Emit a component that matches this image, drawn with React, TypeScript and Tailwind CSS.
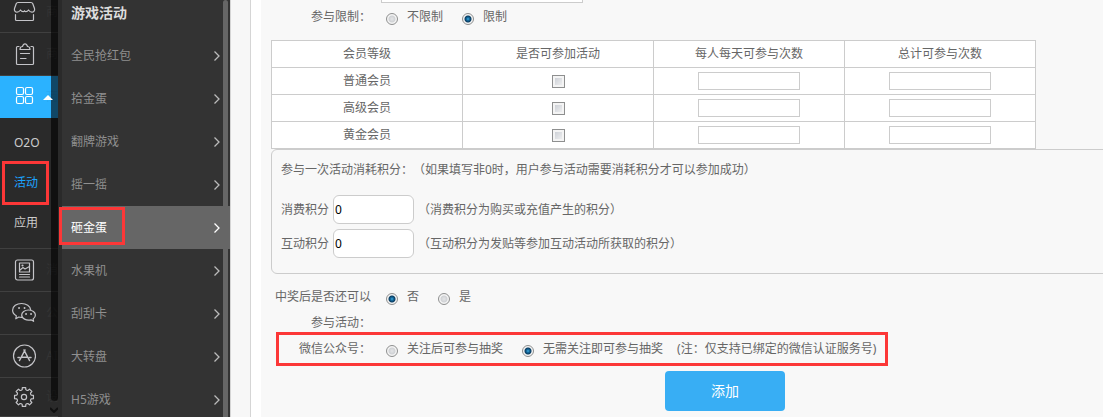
import type { ReactNode } from 'react'

const CONSUME_ROWS = [
  { id: 'consume', label: '消费积分', hint: '（消费积分为购买或充值产生的积分）' },
  { id: 'interact', label: '互动积分', hint: '（互动积分为发贴等参加互动活动所获取的积分）' },
]

const LEVELS = ['普通会员', '高级会员', '黄金会员']

const COLUMNS = ['会员等级', '是否可参加活动', '每人每天可参与次数', '总计可参与次数']

const GAMES = ['全民抢红包', '拾金蛋', '翻牌游戏', '摇一摇', '砸金蛋', '水果机', '刮刮卡', '大转盘', 'H5游戏']

const ACTIVE_GAME = '砸金蛋'

function Icon({ children }: { children: ReactNode }) {
  return (
    <svg viewBox="0 0 24 24" className="size-6 shrink-0" fill="none" stroke="currentColor" strokeWidth="1.2" strokeLinejoin="round" strokeLinecap="round">
      {children}
    </svg>
  )
}

function ShopIcon() {
  return (
    <Icon>
      <path d="M6 2.500h13c1 0 1.500.5 1.800 1.300l1.700 4.700c.6 2-.8 3.700-2.600 3.700-1.500 0-2.500-.9-3.400-2.200-.8 1.300-1.700 1.700-2.600 1.700-.6 0-1.100-.4-1.400-1-.3.6-.8 1-1.400 1-.9 0-1.800-.4-2.600-1.700-.9 1.300-1.900 2.200-3.400 2.200-1.800 0-3.200-1.700-2.600-3.700l1.700-4.700C4.500 3 5 2.500 6 2.500z" />
      <path d="M3.500 14.500v5a1 1 0 0 0 1 1h16a1 1 0 0 0 1-1v-5" />
    </Icon>
  )
}

function ClipboardIcon() {
  return (
    <Icon>
      <path d="M7 4.500H5.500a1 1 0 0 0-1 1v16a1 1 0 0 0 1 1h15a1 1 0 0 0 1-1v-16a1 1 0 0 0-1-1H19" />
      <path d="M8 7.500c0-2 1-3 2.500-3 .5-1.700 1.200-2.700 2.500-2.700s2 1 2.500 2.700c1.500 0 2.500 1 2.500 3z" />
      <path d="M8.500 11.500h9M8.500 16.500h5.500" />
    </Icon>
  )
}

function GridIcon() {
  return (
    <Icon>
      <rect x="4.500" y="2.500" width="7" height="7" rx="1.500" />
      <rect x="13.500" y="2.500" width="7" height="7" rx="1.500" />
      <rect x="4.500" y="11.500" width="7" height="7" rx="1.500" />
      <rect x="13.500" y="11.500" width="7" height="7" rx="1.500" />
    </Icon>
  )
}

function ArticleIcon() {
  return (
    <Icon>
      <rect x="3.500" y="2" width="18" height="20" rx="2" />
      <rect x="7.500" y="5" width="10" height="9" />
      <path d="M8 12l3-2.500 2 1.500 4.500-2.500M7.500 16.500h10M7.500 19h10" />
      <circle cx="10.500" cy="7.500" r=".5" />
    </Icon>
  )
}

function WechatIcon() {
  return (
    <Icon>
      <path d="M10.500 16.300c-1.300.2-2.500.1-3.700-.3L3.800 17.800l.5-3C1.800 13.300.6 11.500.6 9.200c0-4 4-6.700 9-6.700 4.700 0 8.600 2.500 9.100 6.300" />
      <path d="M16.500 9c4 0 6.900 2.200 6.900 5 0 1.700-.9 3-2.300 3.900l.5 2.400-2.600-1.500c-4.800 1.100-9.300-1.300-9.300-4.800 0-2.800 2.900-5 6.800-5z" />
      <path d="M7 7h.1M12.500 7h.1M14 13h.1M19 13h.1" strokeWidth="1.800" />
    </Icon>
  )
}

function AppIcon() {
  return (
    <Icon>
      <circle cx="12.500" cy="12" r="11" />
      <path d="M12 6l5.500 10.500M13 6L7.500 16.500M9.500 13.200h6M6 13.500h1.500M17.500 13.500H19" strokeWidth="1.500" />
    </Icon>
  )
}

// eight rounded teeth around a 12,12 centre
function gearPath() {
  const at = (r: number, deg: number) => {
    const a = (deg * Math.PI) / 180
    return `${(12 + r * Math.cos(a)).toFixed(2)} ${(12 + r * Math.sin(a)).toFixed(2)}`
  }
  let d = ''
  for (let k = 0; k < 8; k++) {
    const c = k * 45
    d += `${k ? 'L' : 'M'}${at(7.6, c - 14)} L${at(9.6, c - 10)} L${at(9.6, c + 10)} L${at(7.6, c + 14)} Q${at(6.9, c + 22.5)} ${at(7.6, c + 31)} `
  }
  return d + 'Z'
}

function GearIcon() {
  return (
    <Icon>
      <path d={gearPath()} />
      <circle cx="12" cy="12" r="2.600" />
    </Icon>
  )
}

function RailItem({ icon, ghost, className = 'h-[43px]' }: { icon: ReactNode; ghost: string; className?: string }) {
  return (
    <a href="#" className={`flex shrink-0 items-center overflow-hidden border-b border-[#404040] pl-3 text-[#c4c4c8] ${className}`}>
      {icon}
      <span className="ml-[10px] text-[#343434]">{ghost}</span>
    </a>
  )
}

function Rail() {
  return (
    <nav className="relative flex w-[58px] shrink-0 flex-col bg-[#2a2a2a]">
      <RailItem icon={<ShopIcon />} ghost="商" className="h-[33px] pb-2" />
      <RailItem icon={<ClipboardIcon />} ghost="商" />
      <a href="#" className="flex h-[42px] shrink-0 items-center overflow-hidden bg-[#2bb2ff] pl-3 text-white">
        <GridIcon />
        <span className="ml-[10px] text-[#2aa9f2]">商</span>
      </a>

      <div className="flex h-[131px] shrink-0 flex-col justify-center border-b border-[#404040] text-[#ccc]">
        <a href="#" className="flex h-10 items-center pl-[14px]">O2O</a>
        <a href="#" className="relative flex h-10 items-center pl-[14px] text-[#1ba4ff]">
          活动
          <span className="absolute -inset-y-0.5 left-0.5 w-[47px] border-3 border-[#fc3737]" />
        </a>
        <a href="#" className="flex h-10 items-center pl-[14px]">应用</a>
      </div>

      <RailItem icon={<ArticleIcon />} ghost="消" />
      <RailItem icon={<WechatIcon />} ghost="公" />
      <RailItem icon={<AppIcon />} ghost="AI" />
      <RailItem icon={<GearIcon />} ghost="设" className="h-[39px]" />

      <span className="absolute bottom-4 right-0 top-0 w-[7px] rounded-b-full bg-black/60" />
      <span className="absolute left-[43px] top-[95px] border-x-5 border-b-5 border-x-transparent border-b-white" />
      <svg viewBox="0 0 8 6" className="absolute bottom-1 right-0 h-1.5 w-2" fill="none" stroke="#111" strokeWidth="2">
        <path d="M0 1l4 4 4-4" />
      </svg>
    </nav>
  )
}

function GameMenu() {
  return (
    <nav className="relative ml-1 flex w-[168px] shrink-0 flex-col bg-[#333]">
      <span className="absolute inset-y-0 right-0.5 w-[5px] rounded-t-full bg-[#666]" />
      <h2 className="flex h-[34px] shrink-0 items-center pb-2 pl-[9px] text-sm font-bold text-[#ddd]">游戏活动</h2>
      {GAMES.map(name => {
        const active = name === ACTIVE_GAME
        return (
          <a
            key={name}
            href="#"
            className={`relative flex h-[43px] shrink-0 items-center justify-between pl-[9px] pr-[10px] ${active ? 'bg-[#666] text-white' : 'text-[#8f8f8f]'}`}
          >
            {name}
            <svg viewBox="0 0 6 10" className={`h-2.5 w-1.5 ${active ? 'text-white' : 'text-[#bbb]'}`} fill="none" stroke="currentColor" strokeWidth="1.3">
              <path d="M.5.5L5 5 .5 9.500" />
            </svg>
            {active && <span className="absolute -left-[3px] top-px h-[38px] w-[66px] border-3 border-[#fc3737]" />}
          </a>
        )
      })}
    </nav>
  )
}

function Radio({ name, label, checked }: { name: string; label: string; checked?: boolean }) {
  return (
    <label className="flex items-center gap-[9px]">
      <input
        type="radio"
        name={name}
        defaultChecked={checked}
        className="mt-1 size-3 appearance-none rounded-full border border-[#8e8f8f] bg-[radial-gradient(circle_at_center,#e4e5e7_0,#d0d2d5_3px,#f4f4f4_4px)] checked:bg-[radial-gradient(circle_at_center,#5cc3ee_0,#1878b0_1px,#0b3d61_3px,#f4f4f4_4px)]"
      />
      {label}
    </label>
  )
}

function FormRow({ label, children }: { label: string; children: ReactNode }) {
  return (
    <div role="group" aria-label={label} className="flex">
      <span className="w-[100px] text-right leading-[26px]">{label}</span>
      <div className="ml-[15px] flex h-[26px] items-center gap-[19px]">{children}</div>
    </div>
  )
}

function LevelTable() {
  return (
    <table className="w-[765px] table-fixed border-collapse bg-white text-center">
      <thead>
        <tr className="h-[27px]">
          {COLUMNS.map(c => (
            <th key={c} className="border border-[#ccc] p-0 font-normal">{c}</th>
          ))}
        </tr>
      </thead>
      <tbody>
        {LEVELS.map(level => (
          <tr key={level} className="h-[27px]">
            <td className="border border-[#ccc] p-0">{level}</td>
            <td className="border border-[#ccc] p-0">
              <input
                type="checkbox"
                aria-label={`${level} 是否可参加活动`}
                className="mx-auto block size-[13px] appearance-none border border-[#8e8f8f] bg-linear-to-br from-[#c5c9d0] to-[#f6f6f6] shadow-[inset_0_0_0_2px_#f4f4f4] checked:bg-[#1270a8]"
              />
            </td>
            {['每人每天可参与次数', '总计可参与次数'].map(c => (
              <td key={c} className="border border-[#ccc] p-0">
                <input type="text" aria-label={`${level} ${c}`} className="mx-auto block h-[18px] w-[102px] border border-[#ccc] bg-white px-1" />
              </td>
            ))}
          </tr>
        ))}
      </tbody>
    </table>
  )
}

export default function App() {
  return (
    <div className="flex h-screen overflow-hidden bg-[#2a2a2a] font-['Noto_Sans','Noto_Sans_CJK_SC',sans-serif] text-xs text-[#666] [text-spacing-trim:space-all]">
      <Rail />
      <GameMenu />

      <div className="w-[21px] shrink-0 border-x border-[#d5d5d5] bg-[#f7f7f7]" />

      <main className="min-w-0 flex-1 border-l-10 border-white bg-[#f8f8f8] pl-[10px]">
        <input type="text" aria-label="活动名称" className="ml-[110px] block h-[3px] w-[202px] border border-t-0 border-[#ccc] bg-white" />

        <div className="mt-px">
          <FormRow label="参与限制：">
            <Radio name="limit" label="不限制" />
            <Radio name="limit" label="限制" checked />
          </FormRow>
        </div>

        <div className="mt-[10px]">
          <LevelTable />
        </div>

        <section className="-mr-2 h-[125px] rounded-md border border-[#ccc] pl-[9px] pt-[10px]">
          <p className="leading-5">参与一次活动消耗积分：（如果填写非0时，用户参与活动需要消耗积分才可以参加成功）</p>
          <div className="mt-[15px] flex flex-col gap-[5px]">
            {CONSUME_ROWS.map(row => (
              <div key={row.id} className="flex items-center gap-1">
                <label htmlFor={row.id}>{row.label}</label>
                <input id={row.id} type="text" defaultValue="0" className="h-[29px] w-[81px] rounded-md border border-[#ccc] bg-white px-px text-xs text-black" />
                <span>{row.hint}</span>
              </div>
            ))}
          </div>
        </section>

        <div className="mt-[10px]">
          <FormRow label="中奖后是否还可以参与活动：">
            <Radio name="again" label="否" checked />
            <Radio name="again" label="是" />
          </FormRow>
        </div>

        <div className="relative">
          <FormRow label="微信公众号：">
            <Radio name="wechat" label="关注后可参与抽奖" />
            <Radio name="wechat" label="无需关注即可参与抽奖" checked />
            <span className="-ml-[5px]">(注：仅支持已绑定的微信认证服务号)</span>
          </FormRow>
          <span className="pointer-events-none absolute -inset-y-1 left-[5px] w-[612px] border-3 border-[#fc3737]" />
        </div>

        <button type="button" className="ml-[394px] mt-[9px] block h-10 w-[120px] rounded bg-[#38aef4] text-sm text-white">
          添加
        </button>
      </main>
    </div>
  )
}
